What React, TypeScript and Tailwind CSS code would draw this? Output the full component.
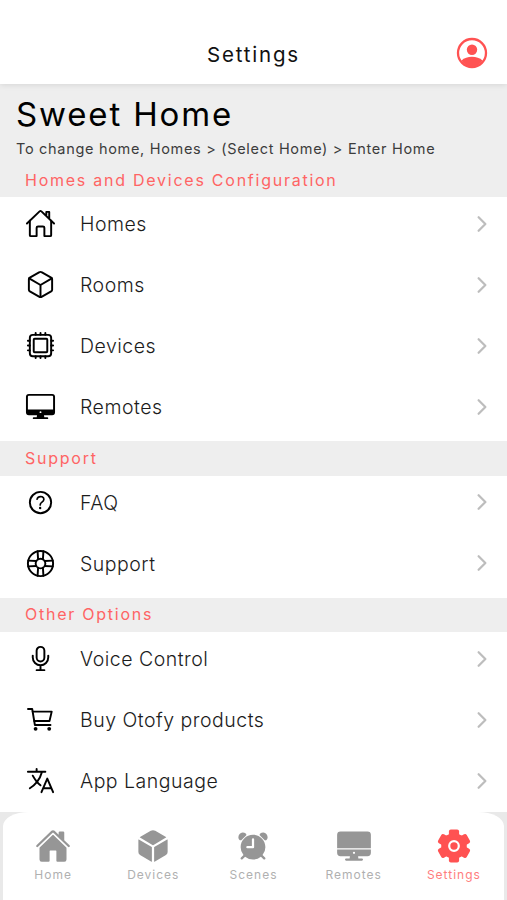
import type { ComponentType } from 'react';
import {
  IoAlarm,
  IoChevronForward,
  IoCube,
  IoCubeOutline,
  IoDesktop,
  IoDesktopOutline,
  IoHardwareChipOutline,
  IoHelpBuoyOutline,
  IoHelpCircleOutline,
  IoHome,
  IoHomeOutline,
  IoLanguageOutline,
  IoMicOutline,
} from 'react-icons/io5';

interface Option {
  label: string;
  icon: ComponentType<{ className?: string }>;
}

const ProfileIcon = () => (
  <svg width="32" height="32" viewBox="0 0 32 32" fill="none">
    <circle cx="16" cy="16" r="14" stroke="#ff5252" strokeWidth="2.3" />
    <circle cx="16" cy="12.8" r="5.2" fill="#ff5252" />
    <path d="M5.500 23.500C8 20.900 12 19.800 16 19.800s8 1.100 10.500 3.700C24 27.600 20 30 16 30s-8-2.400-10.500-6.500z" fill="#ff5252" />
  </svg>
);

const CartIcon = ({ className }: { className?: string }) => (
  <svg className={className} viewBox="0 0 31 31" fill="none" stroke="currentColor" strokeWidth="1.9" strokeLinecap="round" strokeLinejoin="round">
    <path d="M3 5h4.200l2.700 16h15.600" />
    <path d="M7.700 7.600h19l-2.200 9.400H9.300" />
    <circle cx="10.600" cy="24.800" r="1.900" fill="currentColor" stroke="none" />
    <circle cx="24.200" cy="24.800" r="1.900" fill="currentColor" stroke="none" />
  </svg>
);

const GearIcon = ({ className }: { className?: string }) => (
  <svg className={className} viewBox="0 0 36 36" fill="currentColor">
    <circle cx="18" cy="18" r="12.800" />
    <rect x="12.900" y="1.500" width="10.200" height="33" rx="2" />
    <rect x="12.900" y="1.500" width="10.200" height="33" rx="2" transform="rotate(60 18 18)" />
    <rect x="12.900" y="1.500" width="10.200" height="33" rx="2" transform="rotate(120 18 18)" />
    <circle cx="18" cy="18" r="4.800" fill="none" stroke="white" strokeWidth="2.200" />
  </svg>
);

const homeOptions: Option[] = [
  { label: 'Homes', icon: IoHomeOutline },
  { label: 'Rooms', icon: IoCubeOutline },
  { label: 'Devices', icon: IoHardwareChipOutline },
  { label: 'Remotes', icon: IoDesktopOutline },
];

const supportOptions: Option[] = [
  { label: 'FAQ', icon: IoHelpCircleOutline },
  { label: 'Support', icon: IoHelpBuoyOutline },
];

const otherOptions: Option[] = [
  { label: 'Voice Control', icon: IoMicOutline },
  { label: 'Buy Otofy products', icon: CartIcon },
  { label: 'App Language', icon: IoLanguageOutline },
];

const tabs: Option[] = [
  { label: 'Home', icon: IoHome },
  { label: 'Devices', icon: IoCube },
  { label: 'Scenes', icon: IoAlarm },
  { label: 'Remotes', icon: IoDesktop },
  { label: 'Settings', icon: GearIcon },
];

const SectionTitle = ({ title }: { title: string }) => (
  <h2 className="flex h-[34.4px] items-center bg-[#eeeeee] pb-px pl-[25px] text-base leading-5 tracking-[1.75px] text-[#ff6464]">
    {title}
  </h2>
);

const OptionList = ({ options }: { options: Option[] }) => (
  <ul>
    {options.map(({ label, icon: Icon }) => (
      <li key={label} className="flex h-[61px] items-center pr-[13px] pb-2 pl-[25px]">
        <Icon className="size-[31px] text-black" />
        <span className="ml-6 flex-1 pt-[2px] text-[19.5px] font-light tracking-[0.5px] text-[#1c1c1c]">{label}</span>
        <IoChevronForward className="size-6 text-[#bdbdbd]" />
      </li>
    ))}
  </ul>
);

export default function App() {
  return (
    <div className="flex h-[900px] w-[507px] flex-col overflow-hidden bg-white font-['Inter',sans-serif]">
      <header className="z-10 grid h-[84px] shrink-0 grid-cols-[1fr_auto_1fr] items-center bg-white pt-[25px] shadow-[0_1px_6px_rgba(0,0,0,0.1)]">
        <span />
        <h1 className="pt-[2px] text-[20.5px] tracking-[1.8px] text-[#111111]">Settings</h1>
        <button className="mr-[19px] mb-[3px] justify-self-end" aria-label="Profile">
          <ProfileIcon />
        </button>
      </header>

      <main className="h-[727.5px] shrink-0">
        <div className="h-[79px] bg-[#eeeeee] pt-[11px] pl-4">
          <p className="text-[33px] leading-[38px] tracking-[1.85px] text-black">Sweet Home</p>
          <p className="mt-[7px] text-[14.5px] leading-[18px] tracking-[0.69px] text-[#3c3c3c]">
            To change home, Homes &gt; (Select Home) &gt; Enter Home
          </p>
        </div>
        <SectionTitle title="Homes and Devices Configuration" />
        <OptionList options={homeOptions} />
        <SectionTitle title="Support" />
        <OptionList options={supportOptions} />
        <SectionTitle title="Other Options" />
        <OptionList options={otherOptions} />
      </main>

      <div className="flex-1 bg-[#e9e9e9] px-[3px]">
        <nav className="grid h-full grid-cols-5 rounded-t-[26px_14px] bg-white pt-[16.5px]">
          {tabs.map(({ label, icon: Icon }) => (
            <button
              key={label}
              className={
                label === 'Settings'
                  ? 'flex flex-col items-center text-[#ff5252]'
                  : 'flex flex-col items-center text-[#969696]'
              }
            >
              <Icon className="size-[36px]" />
              <span className="mt-[3px] text-xs leading-4 tracking-[1px] opacity-75">{label}</span>
            </button>
          ))}
        </nav>
      </div>
    </div>
  );
}
